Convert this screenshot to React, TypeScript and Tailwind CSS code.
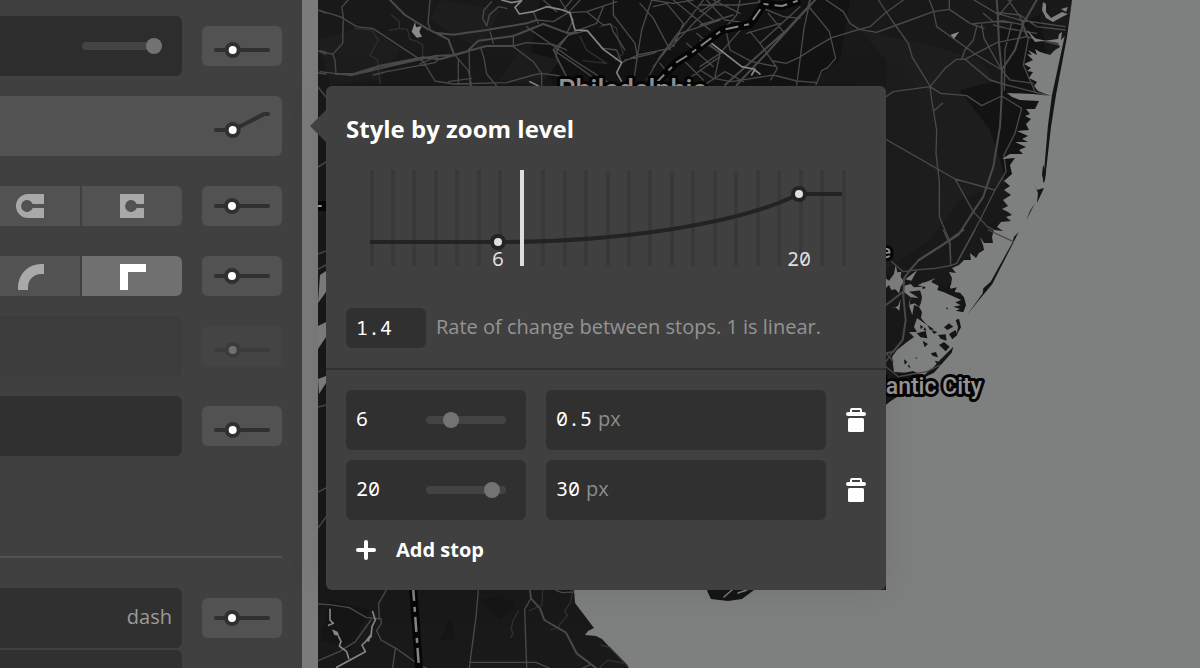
import React, { useState } from "react";

const mono = "font-['Noto_Sans_Mono','DejaVu_Sans_Mono',monospace]";

const slider =
  "h-4 w-20 shrink-0 appearance-none bg-transparent " +
  "[&::-webkit-slider-runnable-track]:h-2 [&::-webkit-slider-runnable-track]:rounded-full [&::-webkit-slider-runnable-track]:bg-[#434343] " +
  "[&::-webkit-slider-thumb]:-mt-1 [&::-webkit-slider-thumb]:size-4 [&::-webkit-slider-thumb]:appearance-none [&::-webkit-slider-thumb]:rounded-full [&::-webkit-slider-thumb]:bg-[#737373]";

function CurveIcon({ low = false, rising = false }: { low?: boolean; rising?: boolean }) {
  const y = low || rising ? 24 : 20;
  const x = low || rising ? 30.7 : 30;
  return (
    <svg width="80" height="40" viewBox="0 0 80 40" fill="none" aria-hidden="true">
      <path
        d={rising ? "M14 24H31L61 8.6Q62 8 63 8H66" : `M14 ${y}H66`}
        stroke="#303030"
        strokeWidth="4"
        strokeLinecap="round"
        strokeLinejoin="round"
      />
      <circle cx={x} cy={y} r="6" fill="#fff" stroke="#303030" strokeWidth="4" />
    </svg>
  );
}

function CurveButton({ low, label, disabled }: { low?: boolean; label: string; disabled?: boolean }) {
  return (
    <button
      type="button"
      aria-label={label}
      disabled={disabled}
      className="h-10 w-20 shrink-0 overflow-hidden rounded-md bg-[#525252] disabled:opacity-25"
    >
      <CurveIcon low={low} />
    </button>
  );
}

function TrashIcon() {
  return (
    <svg width="20" height="24" viewBox="0 0 20 24" fill="#fff" aria-hidden="true">
      <path
        fillRule="evenodd"
        d="M4 4V2Q4 0 6 0H14Q16 0 16 2V4H18Q20 4 20 6T18 8H2Q0 8 0 6T2 4ZM6 2V4H14V2Z"
      />
      <rect x="2" y="10" width="16" height="14" rx="1.5" />
    </svg>
  );
}

function Sidebar() {
  return (
    <aside className="flex w-[302px] shrink-0 flex-col overflow-hidden bg-[#404040] pt-4 pr-5">
      <div className="flex items-center gap-5">
        <div className="flex h-[60px] flex-1 items-center justify-end rounded-r-md bg-[#2d2d2d] pr-5">
          <input type="range" aria-label="Opacity" min={0} max={1} step={0.01} defaultValue={1} className={slider} />
        </div>
        <CurveButton low label="Opacity by zoom" />
      </div>

      <button
        type="button"
        aria-label="Width by zoom"
        className="mt-5 flex h-[60px] shrink-0 items-center justify-end rounded-r-md bg-[#525252]"
      >
        <CurveIcon rising />
      </button>

      <div className="mt-[30px] flex items-center gap-5">
        <div className="flex h-10 flex-1 gap-0.5">
          <button type="button" aria-label="Round cap" className="flex w-20 items-center bg-[#525252] pl-4">
            <svg width="28" height="24" viewBox="0 0 28 24" aria-hidden="true">
              <path
                fill="#a9a9a9"
                d="M28 0H12A12 12 0 0 0 12 24H28V14H16.7A6 6 0 1 1 16.7 10H28Z"
              />
            </svg>
          </button>
          <button
            type="button"
            aria-label="Square cap"
            className="flex flex-1 items-center rounded-r-md bg-[#525252] pl-[38px]"
          >
            <svg width="24" height="24" viewBox="0 0 24 24" aria-hidden="true">
              <path fill="#a9a9a9" d="M24 0H0V24H24V14H16.7A6 6 0 1 1 16.7 10H24Z" />
            </svg>
          </button>
        </div>
        <CurveButton label="Cap by zoom" />
      </div>

      <div className="mt-[30px] flex items-center gap-5">
        <div className="flex h-10 flex-1 gap-0.5">
          <button type="button" aria-label="Round join" className="flex w-20 items-center bg-[#525252] pl-[18px]">
            <svg width="26" height="24" viewBox="0 0 26 24" className="overflow-visible" aria-hidden="true">
              <path fill="#a9a9a9" d="M0 26V23A23 23 0 0 1 23 0H26V10H23A13 13 0 0 0 10 23V26Z" />
            </svg>
          </button>
          <button
            type="button"
            aria-label="Miter join"
            aria-pressed="true"
            className="flex flex-1 items-center rounded-r-md bg-[#707070] pl-[38px]"
          >
            <svg width="26" height="24" viewBox="0 0 26 24" className="overflow-visible" aria-hidden="true">
              <path fill="#fff" d="M0 0H26V8H8V26H0Z" />
            </svg>
          </button>
        </div>
        <CurveButton label="Join by zoom" />
      </div>

      <div className="mt-5 flex items-center gap-5">
        <div className="h-[60px] flex-1 rounded-r-md bg-[#3c3c3c]" />
        <CurveButton low disabled label="Miter limit by zoom" />
      </div>

      <div className="mt-5 flex items-center gap-5">
        <div className="h-[60px] flex-1 rounded-r-md bg-[#303030]" />
        <CurveButton low label="Blur by zoom" />
      </div>

      <hr className="mt-[100px] h-0.5 shrink-0 border-0 bg-[#525252]" />

      <div className="mt-[30px] flex items-center gap-5">
        <div className="flex h-[60px] flex-1 items-center justify-end rounded-r-md bg-[#303030] pr-2.5 pb-0.5 text-xl text-[#9b9b9b]">
          dash
        </div>
        <CurveButton label="Dash by zoom" />
      </div>
      <div className="mt-0.5 mr-[100px] h-[60px] shrink-0 rounded-r-md bg-[#303030]" />
    </aside>
  );
}

function MapCanvas() {
  return (
    <svg
      className="block h-full w-full"
      viewBox="318 0 882 668"
      preserveAspectRatio="xMinYMin slice"
      role="img"
      aria-label="Map of Philadelphia and Atlantic City"
      strokeLinejoin="round"
      strokeLinecap="round"
    >
      <rect x="318" width="882" height="668" fill="#191919" />
      <path d="M540 0H850L840 60 800 90H560L530 60Z" fill="#131313" />
      <path d="M860 30L930 45 980 60 1000 90 960 92 1000 140 1010 180 960 200 930 240 886 270V60Z" fill="#1d1d1d" />
      <path d="M1000 30L1040 15 1050 80 1040 110 1010 200 1000 160 990 130 960 90 1000 80Z" fill="#131313" />
      <path d="M318 40L370 25 400 50 380 80 330 86Z M440 0L500 10 480 50 430 20Z M520 50L560 60 540 86 500 80Z" fill="#1d1d1d" />
      <path d="M330 600L370 610 350 650 320 640Z M440 640L450 618 456 640Z M480 600L500 595 515 605 500 620Z" fill="#151515" />

      {/* Delaware and Lehigh side */}
      <g transform="translate(320 0) scale(.33333)" fill="none" stroke="#4a4a4a" strokeWidth="4">
        <path
          stroke="#303030"
          d="M215 45L238 65V85M208 92L238 85 262 88 270 118 292 125 308 135V170M105 85L155 90 175 120 150 165 172 180 180 250M840 80L870 72 890 85 895 120 910 160 885 180M780 110L800 150 860 190 790 182"
        />
        <path d="M0 32L60 50 110 80 160 86 310 185 345 243 400 252 560 248 640 225 665 220 720 228M84 0L65 22 70 50 68 130 38 163 45 180 48 222M0 152L38 163M0 215L90 226 158 212M330 0L324 70 330 85M385 118L400 160M160 225L200 215 345 188 355 178 348 170 300 192M483 145L492 175 500 222 530 258M510 95L520 130M500 78L488 55 492 30 515 5M500 78L508 45 535 20 560 25M580 138L620 128 700 133 740 150M580 105V140L640 185 665 220V258M712 150L708 170 738 228M700 150L745 240M385 245L455 235M415 180V250M447 150L450 258M400 160L445 212 455 258M650 60L700 65 745 38" />
        <path
          strokeWidth="6"
          d="M210 0L255 45 320 85 345 98 400 104 440 98 500 90 530 85 620 70 650 60M345 98L385 118 403 165M48 222L100 222 180 197 310 172 360 178 440 155 475 122 580 108 670 72 745 100 770 98M90 226L180 205 290 180 345 168 400 165 500 138 580 138"
        />
        <path d="M750 38L800 35 890 5M800 35L850 75 872 72 880 95 915 150M640 35L655 70M620 80L640 95 760 180 870 250M720 0L760 60 740 100M755 0L730 30M880 0V45L945 130 952 170M670 0L710 35M780 0L745 38M850 20L830 70 750 100 700 150 760 190 830 240M800 92L745 105 710 150M905 188L952 165 1050 145 1130 60 1200 0M952 170L940 250M952 170L965 90 985 30 995 0 1060 10 1120 0M960 10L1000 55 1050 150M1000 20L1040 10 1090 70 1060 140M1060 0L1170 90M1100 0L1180 60M1150 0L1020 170 980 240M1200 60L1080 100 1000 200M905 188L890 150 850 145M915 180L1000 160 1020 150M1100 130L1180 200M1130 100L1200 160M1080 170L1150 240M1200 170L1100 240M1020 190L1040 215" />
        <path stroke="#858585" d="M545 0L575 8 605 2 585 22 598 42 640 35 680 20 720 28 750 38 765 90 802 92 850 148 905 188 890 218 905 245M630 245L655 258" strokeWidth="5" />
        <path fill="#8a8a8a" stroke="none" d="M285 65L288 82 305 78 298 95 306 110 290 113 275 95Z" />
      </g>

      {/* Pine Barrens and northern shore */}
      <g transform="translate(700 0) scale(.33333)" fill="none" stroke="#4a4a4a" strokeWidth="4">
        <path d="M378 0L430 35 450 70 478 88 530 97 590 75 700 35 748 28 810 70 852 85M535 0L575 60 625 130 637 172 690 258 695 300 710 390 708 460 718 545 718 650 750 725 752 780M478 88L395 113 340 145 298 172 258 190 220 183M325 18L388 95 407 175 383 203 365 212 348 255M325 25L312 85 300 180 290 255M610 0L555 40 510 80 478 88M688 0L700 30 710 80 830 165 905 210M748 0V28M822 0L890 40 960 60 1095 80M935 0L893 50M558 290L580 275 690 260 735 205 770 178 795 178 890 128 980 110 1080 135M795 178L870 240 920 255 1050 288M690 260L722 280 800 287 845 317 905 288 965 325 945 400 912 465 918 515 885 570 840 660 775 780M558 418L765 537 885 570M765 537L820 635 862 680 940 722M702 332L728 310M830 80L820 120 795 150 785 178M845 75L852 115 905 210M850 40L880 65 935 68 915 150 913 270M815 72L910 62 970 75 985 115 970 195 1005 275M893 38L960 45 1010 80 1095 90M880 75L920 85 1010 100M925 0L960 50 980 110M905 210L930 240 1000 250" />
        <path
          strokeWidth="6"
          d="M890 0L893 40 897 130 905 210V290L900 380 880 500 850 590 820 635 775 705 655 780M1010 0L970 70 945 150 905 210M75 255L170 170 260 90 325 20 330 0M110 255L195 165 290 60 345 0"
        />
        <path d="M0 35L60 0M0 15L120 15 190 5M120 0L110 45 70 90M0 75L100 45M20 0L75 60 150 70M40 0L120 40M0 200L60 160 130 80M150 95L180 130 232 205 212 240M80 100L90 150 155 185 230 200M60 160L45 230M0 210L40 235 95 245 220 225 290 243 350 248M190 25L250 50 300 55M205 40L250 95M140 100L240 70M180 130L300 20M0 120L65 160M20 250L75 215 130 245M175 0L200 30" />
        <path stroke="#8a8a8a" strokeWidth="5" d="M35 130L125 200 160 207 180 222M165 207L155 225" />
        <path fill="#8a8a8a" stroke="none" d="M752 104L778 95 762 116Z" />
      </g>

      {/* Ocean and back bays */}
      <g fill="#7e807f" stroke="none">
        <path d="M1072 0L1066 35 1061 40 1062 32 1059 34 1058 39 1035 42 1026 29 1036 39 1058 43 1060 47 1055 50 1050 55 1040 52 1035 49 1037 55 1028 50 1032 55 1027 54 1033 60 1024 64 1031 68 1027 71 1033 72 1029 78 1037 82 1034 86 1038 91 1051 96 1033 94 1007 93 1012 97 1020 100 1039 101 1035 109 1026 109 1030 114 1025 116 1031 119 1026 124 1029 130 1017 131 1028 136 1022 139 1028 142 1015 142 1026 147 1019 150 1023 154 1010 154 1002 159 1015 158 1010 165 1012 174 1004 181 1010 186 1004 190 1011 195 1003 200 1008 206 1002 209 1008 212 1012 215 1006 217 1011 221 1001 222 997 227 1003 231 994 230 992 237 993 243 984 243 980 237 983 245 984 250 979 253 976 258 970 253 971 260 964 260 959 265 952 268 956 273 949 272 952 278 951 285 947 290 937 285 931 282 921 283 926 288 920 290 922 297 921 303 919 307 922 312 921 318 927 325 917 318 914 327 917 332 909 332 914 337 907 342 897 350 892 357 894 372 911 373 917 376 886 405 886 590H574L575 603 594 628 588 631 585 635 596 636 602 639 629 668H1200V0Z" />
        <path d="M1043 2L1046 4V12L1051 18 1062 12 1068 14 1062 17 1053 22 1046 18 1042 10ZM1061 9L1068 7 1066 12Z" />
        <path
          transform="translate(884 210) scale(.33333)"
          d="M5 205L15 212 30 192 35 165 40 187 52 185 50 200 60 215 50 230 45 250 34 238 22 240 15 225 5 235ZM58 228L80 222 90 232 115 230 116 240 75 245 104 264 80 262 60 246ZM18 297L42 288 50 268 46 302 34 292ZM64 208L100 180 82 212ZM130 238L145 205 138 240ZM80 260L74 285 92 280 105 290 90 285 85 315 76 290ZM100 226L155 205 120 230Z"
        />
        <path d="M320 275L326 271V292L318 303ZM318 326L326 322V337L318 349ZM318 379L326 376V383L319 394Z" />
      </g>

      {/* Barrier islands and marsh */}
      <g fill="#151515" stroke="none">
        <path d="M1072 0L1067 37 1056 95 1051 127 1045 180 1043 183 1048 125 1052 95 1066 30Z" />
        <path d="M1043 165L1046 172 1044 183 1042 175ZM1034 184L1037 190 1044 188 1037 203 1038 193ZM1035 203L1026 221 1030 211Z" />
        <g transform="translate(884 210) scale(.33333)">
          <path d="M404 66L388 98 325 222 285 270 250 314 280 272 296 250 298 235 320 215 385 98 390 80Z" />
          <path d="M165 225L185 230 195 220 200 236 218 232 212 246 228 248 240 262 246 285 238 307 215 302 228 297 208 290 230 286 214 277 232 270 210 260 180 247 160 240ZM215 330L225 326 231 352 218 375 222 350ZM180 352L195 340 208 350 190 360ZM195 372L215 360 220 375 205 388ZM162 375L185 373 188 392 170 386ZM165 405L180 396 197 410 185 424ZM208 410L203 428 150 488 100 512 150 470 168 450ZM140 430L156 426 162 442 147 438ZM98 370L125 363 130 385 110 382ZM116 392L132 402 122 412ZM122 352L128 362 118 360ZM60 448L70 456 62 464ZM74 462L80 474 72 470ZM108 345L118 350 110 358ZM130 345L150 358 138 360ZM142 360L160 366 150 372ZM186 292L192 294 190 300ZM152 452L165 455 160 464ZM95 440L99 444 96 448Z" />
        </g>
        <path d="M895 375L913 371 925 377 908 390 886 404V382Z" />
        <path d="M707 590H754L742 599 728 601 711 599 708 593Z" />
      </g>
      <path d="M724 597L732 590M738 593L747 590" stroke="#7e807f" strokeWidth="1.5" />

      {/* Atlantic County roads */}
      <g transform="translate(860 230) scale(.33333)" fill="none" stroke="#4a4a4a" strokeWidth="4">
        <path d="M345 0L290 100 272 107 225 115 165 120 130 125 95 95M250 0L270 45 272 107M385 0L460 35M78 410L115 440 160 432 200 425 240 405M78 370L100 395M78 395L95 370" />
        <path strokeWidth="6" d="M310 0L240 50 175 92 150 120 132 145 130 200 137 270 128 330 100 365 78 370M78 225L130 185" />
      </g>

      {/* Southern counties */}
      <g transform="translate(316 570) scale(.33333)" fill="none" stroke="#4a4a4a" strokeWidth="4">
        <path
          stroke="#303030"
          d="M607 123L590 155 585 180 592 188 585 202M770 60L765 95 745 125 755 135 730 165M680 60L678 105 640 122M855 225L880 232 935 288M850 294L875 270 925 280M705 180L730 170"
        />
        <path d="M6 102L40 104 100 113 150 142 195 147 196 160 182 182 195 210 240 235 300 278M210 62L188 100 190 145M165 150L118 215 70 245 6 272M238 235L230 294M487 62L480 140 462 278 460 294M462 277H660L700 294M645 85L626 118 632 294M320 290L345 300M800 294L825 283M720 62L740 68 772 66" />
        <path strokeWidth="6" d="M642 60L645 85 672 115 685 150 750 188 782 250 840 294" />
        <path stroke="#858585" strokeWidth="5" d="M42 118V150L52 160 38 166M170 125L178 150 168 170 165 200 138 225 148 245 62 292M68 200L75 215 70 228 92 245 98 265" />
        <path fill="#858585" stroke="none" d="M48 178L65 185 70 198 55 195ZM165 190L160 215 148 212Z" />
      </g>

      {/* Interstates */}
      <g fill="none" strokeLinecap="butt">
        <path d="M655 84L677 62 690 54 702 45 722 30 750 24 764 4 782 6 800 0" stroke="#060606" strokeWidth="8" />
        <path d="M655 84L677 62 690 54 702 45 722 30 750 24 764 4 782 6 800 0" stroke="#858585" strokeWidth="2" strokeDasharray="13 6 5 6" />
        <path d="M413 586L419 668" stroke="#060606" strokeWidth="8" />
        <path d="M413 586L419 668" stroke="#858585" strokeWidth="2.5" strokeDasharray="15 6 5 5" />
      </g>

      <g fill="none" stroke="#484848" strokeWidth="1.5">
        <path d="M318 10L326 13M318 51L326 54M318 73L326 74M318 87L326 97M318 167L326 162M318 254L326 251M318 269L326 265M318 407L326 405M318 492L326 488M318 528L326 517" />
      </g>
      <path d="M318 201H326V211H318Z" fill="#060606" />
      <path d="M318 206H321" stroke="#999" strokeWidth="2" />

      <g
        className="font-[Roboto,sans-serif] font-medium"
        fill="#969696"
        stroke="#060606"
        strokeWidth="6"
        paintOrder="stroke"
        textAnchor="end"
      >
        <text x="707" y="99" fontSize="27">Philadelphia</text>
        <text x="982" y="394" fontSize="23">Atlantic City</text>
        <text x="891" y="258" fontSize="18">e</text>
      </g>
    </svg>
  );
}

const tickPositions = Array.from({ length: 23 }, (_, i) => Math.floor((i * 472) / 22));

function StopsChart() {
  return (
    <svg
      className="mt-[25px] ml-6 block overflow-visible"
      width="476"
      height="96"
      viewBox="0 0 476 96"
      role="img"
      aria-label="Value curve between zoom 6 and zoom 20"
    >
      {tickPositions.map((x) => (
        <rect key={x} x={x} width="4" height="96" fill="#393939" />
      ))}
      <path d="M0 72H128C248 72 369 54 429 24H472" fill="none" stroke="#232323" strokeWidth="4" />
      <rect x="150" width="4" height="96" fill="#dedede" />
      <g fill="#dedede" stroke="#232323" strokeWidth="4">
        <circle cx="128" cy="72" r="6" />
        <circle cx="429" cy="24" r="6" />
      </g>
      <g className={mono} fill="#dedede" fontSize="20" textAnchor="middle">
        <text x="128" y="96">6</text>
        <text x="429" y="96">20</text>
      </g>
    </svg>
  );
}

type Stop = { zoom: number; value: string };

function StopRow({ stop, onZoom, onValue }: { stop: Stop; onZoom: (z: number) => void; onValue: (v: string) => void }) {
  return (
    <div className="flex items-center gap-5">
      <div className="flex h-[60px] w-[180px] shrink-0 items-center justify-between rounded-md bg-[#303030] pr-5 pl-2.5">
        <input
          aria-label="Zoom level"
          value={stop.zoom}
          onChange={(e) => onZoom(Number(e.target.value) || 0)}
          className={`w-12 bg-transparent pb-0.5 text-xl text-white outline-none ${mono}`}
        />
        <input
          type="range"
          aria-label="Zoom level slider"
          min={0}
          max={22}
          value={stop.zoom}
          onChange={(e) => onZoom(Number(e.target.value))}
          className={slider}
        />
      </div>
      <label className="flex h-[60px] flex-1 items-center gap-1.5 rounded-md bg-[#303030] px-2.5 pb-0.5 text-xl text-[#8c8c8c]">
        <input
          aria-label="Width in pixels"
          value={stop.value}
          onChange={(e) => onValue(e.target.value)}
          className={`bg-transparent text-white outline-none ${mono}`}
          style={{ width: `${stop.value.length}ch` }}
        />
        px
      </label>
      <button type="button" aria-label="Delete stop" className="shrink-0">
        <TrashIcon />
      </button>
    </div>
  );
}

function ZoomPopover() {
  const [rate, setRate] = useState("1.4");
  const [stops, setStops] = useState<Stop[]>([
    { zoom: 6, value: "0.5" },
    { zoom: 20, value: "30" },
  ]);
  const update = (index: number, patch: Partial<Stop>) =>
    setStops(stops.map((s, i) => (i === index ? { ...s, ...patch } : s)));

  return (
    <section className="absolute top-[86px] left-2 w-[560px] rounded-md bg-[#404040] pt-[27px] pb-[30px] shadow-[0_0_40px_rgba(0,0,0,0.1)]">
      <svg className="absolute top-6 -left-4" width="16" height="32" viewBox="0 0 16 32" aria-hidden="true">
        <path d="M0 16L16 0V32Z" fill="#404040" />
      </svg>
      <div className="px-5">
        <h2 className="text-2xl leading-8 font-bold text-white">Style by zoom level</h2>
        <StopsChart />
        <label className="mt-[42px] flex items-center gap-2.5 text-xl text-[#949494]">
          <input
            value={rate}
            onChange={(e) => setRate(e.target.value)}
            className={`h-10 w-20 rounded-md bg-[#303030] px-2.5 pb-0.5 text-white outline-none ${mono}`}
          />
          <span className="pb-0.5">Rate of change between stops. 1 is linear.</span>
        </label>
      </div>
      <hr className="mt-5 h-0.5 border-0 bg-[#303030]" />
      <div className="flex flex-col gap-2.5 px-5 pt-5">
        {stops.map((stop, i) => (
          <StopRow
            key={i}
            stop={stop}
            onZoom={(zoom) => update(i, { zoom })}
            onValue={(value) => update(i, { value })}
          />
        ))}
      </div>
      <button
        type="button"
        onClick={() => setStops([...stops, { zoom: 22, value: "30" }])}
        className="mt-5 ml-[30px] flex items-center gap-5 text-xl leading-5 font-bold text-white"
      >
        <svg width="20" height="20" viewBox="0 0 20 20" stroke="#fff" strokeWidth="4" strokeLinecap="round" aria-hidden="true">
          <path d="M10 2V18M2 10H18" />
        </svg>
        Add stop
      </button>
    </section>
  );
}

export default function App() {
  return (
    <div className="flex h-screen overflow-hidden bg-[#7b7b7b] font-['Open_Sans',sans-serif]">
      <Sidebar />
      <main className="relative ml-4 min-w-0 flex-1">
        <MapCanvas />
        <ZoomPopover />
      </main>
    </div>
  );
}
